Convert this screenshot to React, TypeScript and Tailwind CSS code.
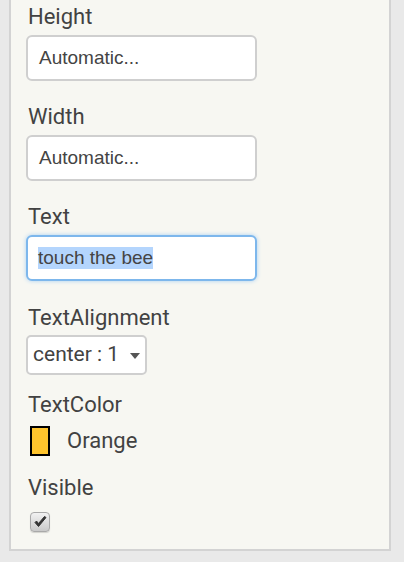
import React from "react"

const labelCls = "text-[22px] leading-[24px] text-[#424242] pl-[2px]"
const inputCls =
  "h-[46px] w-[231px] rounded-[6px] border-2 border-[#cfcfcf] bg-white pl-[11px] flex items-center text-[19px] text-[#444] font-['Liberation_Sans',Arial,sans-serif]"

function Field({ label, value, className = "" }: { label: string; value: string; className?: string }) {
  return (
    <div className={className}>
      <div className={labelCls}>{label}</div>
      <div className={"mt-[6px] " + inputCls}>{value}</div>
    </div>
  )
}

export default function App() {
  return (
    <div className="w-[404px] h-[562px] overflow-hidden bg-[#e9e9e9] font-['Roboto',sans-serif]">
      <div className="ml-[9px] w-[382px] border-x-2 border-b-2 border-[#d3d3d3] bg-[#f7f7f2] pl-[15px] pt-[5px] pb-[17px]">
        <Field label="Height" value="Automatic..." />
        <Field label="Width" value="Automatic..." className="mt-[24px]" />

        <div className="mt-[24px]">
          <div className={labelCls}>Text</div>
          <div className="mt-[6px] h-[46px] w-[231px] rounded-[6px] border-2 border-[#7db7ec] bg-white pl-[10px] flex items-center text-[19px] text-[#444] shadow-[0_0_4px_#a9d0f3] font-['Liberation_Sans',Arial,sans-serif]">
            <span className="bg-[#b4d5fd] leading-[22px]">touch the bee</span>
          </div>
        </div>

        <div className="mt-[25px]">
          <div className={labelCls}>TextAlignment</div>
          <div className="mt-[5px] h-[40px] w-[121px] rounded-[5px] border-2 border-[#cfcfcf] bg-white flex items-center pl-[5px] text-[21px] text-[#424242]">
            <span>center : 1</span>
            <svg width="10" height="6" viewBox="0 0 10 6" className="ml-[11px] mt-[2px]">
              <path d="M0 0h10L5 6z" fill="#555" />
            </svg>
          </div>
        </div>

        <div className="mt-[18px]">
          <div className={labelCls}>TextColor</div>
          <div className="mt-[7px] flex items-center pl-[4px]">
            <div className="h-[30px] w-[20px] border-2 border-black bg-[#fec42d]" />
            <span className="ml-[17px] text-[22px] text-[#424242]">Orange</span>
          </div>
        </div>

        <div className="mt-[19px]">
          <div className={labelCls}>Visible</div>
          <div className="mt-[12px] ml-[4px] h-[20px] w-[20px] rounded-[4px] border border-[#a9a9a9] bg-gradient-to-b from-[#f2f2f2] to-[#c9c9c9] shadow-[0_1px_1px_rgba(0,0,0,0.15)] flex items-center justify-center">
            <svg width="13" height="12" viewBox="0 0 13 12">
              <path d="M1 6.5 L4.5 10.5 L12 1.5 L10.5 0.5 L4.5 7.5 L2.5 5 Z" fill="#333" stroke="#333" strokeWidth="1" strokeLinejoin="round" />
            </svg>
          </div>
        </div>
      </div>
    </div>
  )
}
